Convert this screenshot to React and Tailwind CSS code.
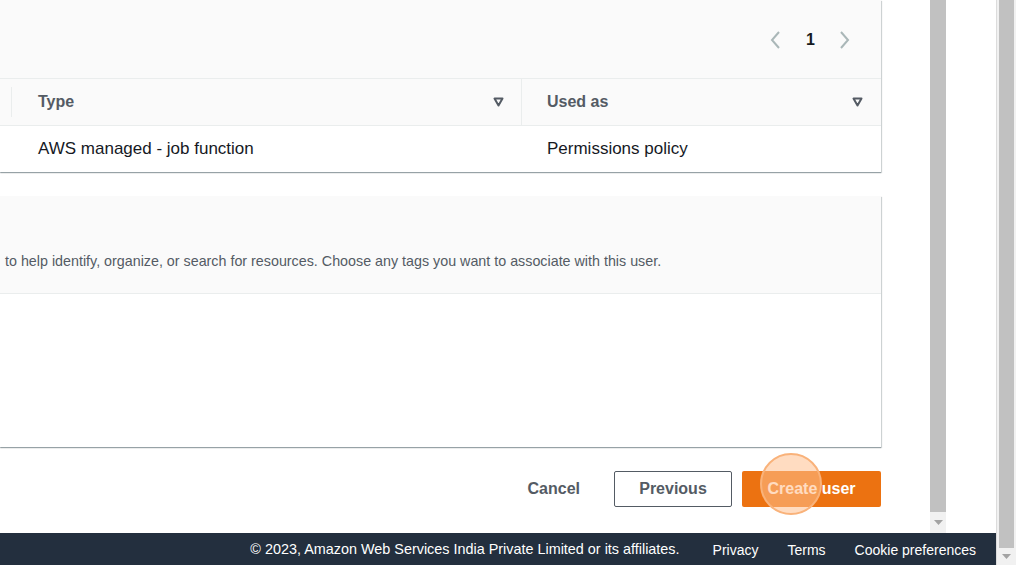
import React from "react";

const FilterIcon = () => (
  <svg width="11" height="10" viewBox="0 0 11 10" className="shrink-0">
    <path d="M1.5 1.5h8L5.5 8.5z" fill="none" stroke="#545b64" strokeWidth="2" strokeLinejoin="round" />
  </svg>
);

const ScrollArrow = () => (
  <svg width="9" height="5" viewBox="0 0 9 5">
    <path d="M0 0h9L4.5 5z" fill="#a3a3a3" />
  </svg>
);

const App = () => {
  return (
    <div
      className="flex h-[565px] w-[1016px] overflow-hidden bg-white"
      style={{ fontFamily: '"Liberation Sans", Arial, sans-serif' }}
    >
      <div className="flex w-[996px] flex-col">
        <div className="flex h-[533px]">
          {/* Page content */}
          <div className="relative w-[930px] pr-[49px]">
            {/* Permissions card */}
            <div className="bg-white shadow-[0_1px_1px_0_rgba(0,28,36,0.3),1px_1px_1px_0_rgba(0,28,36,0.15)]">
              <div className="flex h-[78px] items-center justify-end gap-[22px] bg-[#fafafa] pr-[30px] pt-[2px] text-[#16191f]">
                <svg width="14" height="20" viewBox="0 0 14 20" className="mr-[2px]">
                  <path d="M11 2L4 10l7 8" fill="none" stroke="#aab7b8" strokeWidth="2" />
                </svg>
                <span className="text-[16px] font-bold">1</span>
                <svg width="14" height="20" viewBox="0 0 14 20">
                  <path d="M4 2l7 8-7 8" fill="none" stroke="#aab7b8" strokeWidth="2" />
                </svg>
              </div>
              <div className="grid grid-cols-[12px_510px_359px] border-t border-[#eaeded] bg-[#fafafa]">
                <div className="my-[8px] border-r border-[#eaeded]" />
                <div className="flex h-[46px] items-center justify-between border-r border-[#eaeded] pl-[26px] pr-[17px]">
                  <span className="text-[16px] font-bold text-[#545b64]">Type</span>
                  <FilterIcon />
                </div>
                <div className="flex h-[46px] items-center justify-between pl-[25px] pr-[18px]">
                  <span className="text-[16px] font-bold text-[#545b64]">Used as</span>
                  <FilterIcon />
                </div>
              </div>
              <div className="grid h-[47px] grid-cols-[12px_510px_359px] items-center border-t border-[#eaeded] text-[17px] text-[#16191f]">
                <div />
                <div className="pl-[26px]">AWS managed - job function</div>
                <div className="pl-[25px]">Permissions policy</div>
              </div>
            </div>

            {/* Tags card */}
            <div className="mt-[24px] bg-white shadow-[0_1px_1px_0_rgba(0,28,36,0.3),1px_1px_1px_0_rgba(0,28,36,0.15)]">
              <div className="flex h-[98px] items-end border-b border-[#eaeded] bg-[#fafafa] pb-[21px] pl-[5px] text-[14.3px] text-[#545b64]">
                to help identify, organize, or search for resources. Choose any tags you want to associate with this user.
              </div>
              <div className="h-[153px]" />
            </div>

            {/* Actions */}
            <div className="mt-[24px] flex items-center justify-end">
              <button className="mr-[34px] text-[16px] font-bold text-[#545b64]">Cancel</button>
              <button className="mr-[10px] h-[36px] w-[118px] rounded-[2px] border border-[#545b64] bg-white text-[16px] font-bold text-[#545b64]">
                Previous
              </button>
              <button className="h-[36px] w-[139px] rounded-[2px] bg-[#ec7211] text-[16px] font-bold text-white">
                Create user
              </button>
            </div>

            {/* Click marker */}
            <div className="absolute left-[760px] top-[453px] h-[62px] w-[62px] rounded-full border-2 border-[#f9b27a] bg-[#ffc08f]/55" />
          </div>

          {/* Inner scrollbar */}
          <div className="flex w-[16px] flex-col bg-[#f1f1f1]">
            <div className="h-[512px] bg-[#c1c1c1]" />
            <div className="flex flex-1 items-center justify-center">
              <ScrollArrow />
            </div>
          </div>
          <div className="flex-1 bg-white" />
        </div>

        {/* Footer */}
        <div className="flex h-[32px] items-center justify-end gap-[29px] bg-[#232f3e] pr-[20px] pt-[2px] text-[14px] text-white">
          <span className="mr-[4px] text-[14.4px]">© 2023, Amazon Web Services India Private Limited or its affiliates.</span>
          <span>Privacy</span>
          <span>Terms</span>
          <span>Cookie preferences</span>
        </div>
      </div>

      {/* Outer scrollbar */}
      <div className="flex w-[20px] flex-col border-l border-[#dcdcdc] bg-[#f1f1f1] px-[2px]">
        <div className="h-[548px] bg-[#c1c1c1]" />
        <div className="flex flex-1 items-center justify-center">
          <ScrollArrow />
        </div>
      </div>
    </div>
  );
};

export default App;
